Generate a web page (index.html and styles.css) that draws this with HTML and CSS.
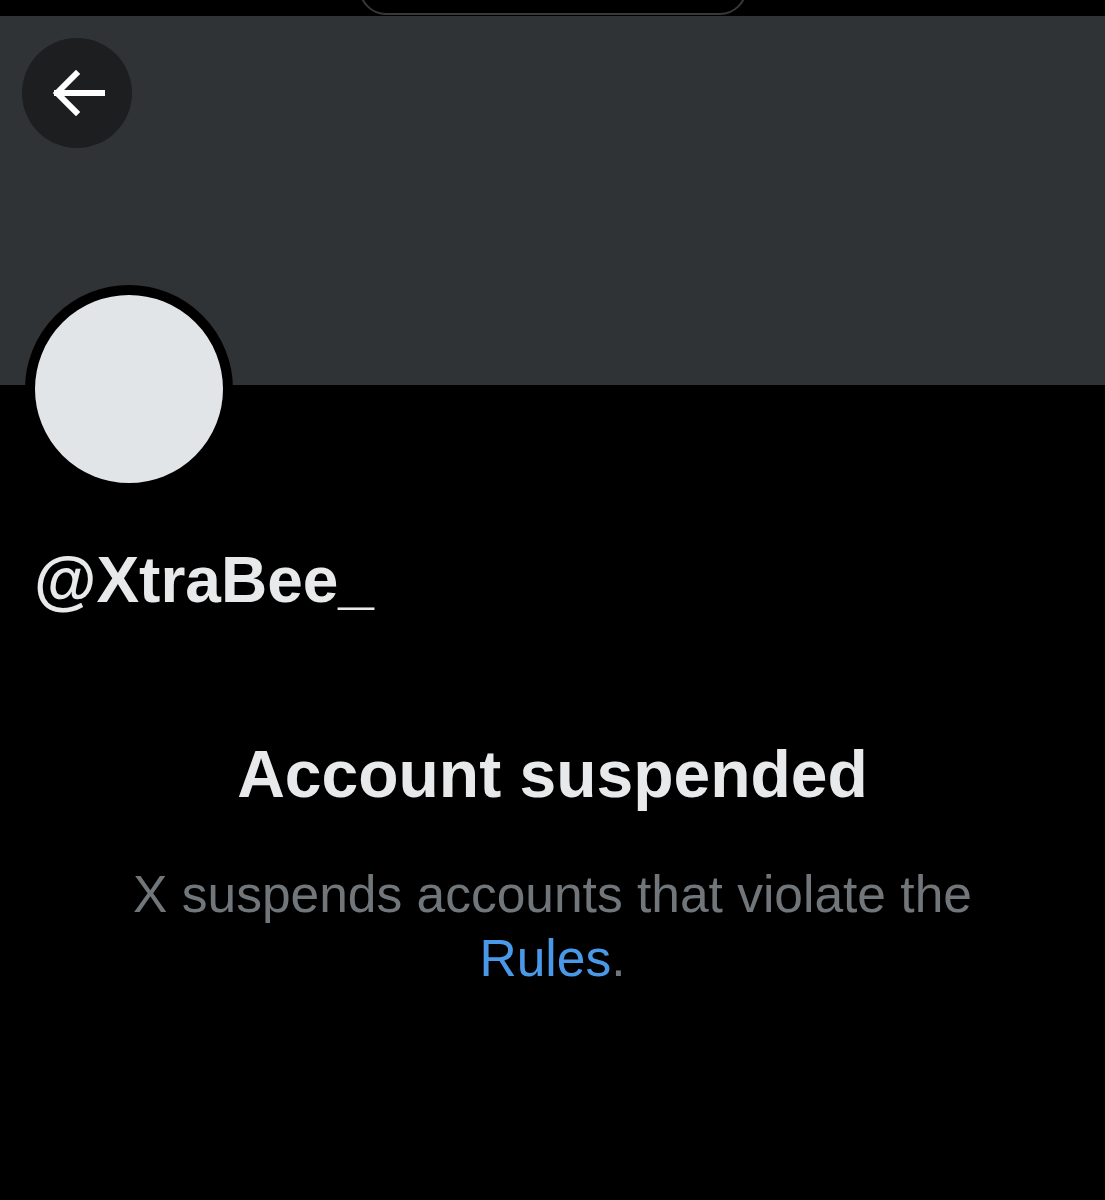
FILE: index.html
```html
<!DOCTYPE html>
<html lang="en">
<head>
    <meta charset="UTF-8">
    <meta name="viewport" content="width=device-width, initial-scale=1.0">
    <title>Account suspended</title>
    <link rel="stylesheet" href="styles.css">
</head>
<body>
    <div class="status-bar">
        <div class="notch"></div>
    </div>

    <div class="banner">
        <button class="back-btn" aria-label="Back">
            <svg viewBox="0 0 110 110" width="110" height="110">
                <path d="M80 55 H35 M54 36 L35 55 L54 74" fill="none" stroke="#fff" stroke-width="6" stroke-linecap="square" stroke-linejoin="miter"/>
            </svg>
        </button>
    </div>

    <div class="profile">
        <div class="avatar"></div>
        <div class="handle">@XtraBee_</div>
    </div>

    <div class="suspended">
        <h1>Account suspended</h1>
        <p>X suspends accounts that violate the <a href="#">Rules</a>.</p>
    </div>
</body>
</html>
```

FILE: styles.css
```css
body {
    margin: 0;
    padding: 0;
    background: #000;
    font-family: "Liberation Sans", Arial, sans-serif;
    height: 1200px;
    overflow: hidden;
}
.status-bar {
    height: 16px;
    display: flex;
    justify-content: center;
    overflow: hidden;
}
.notch {
    width: 384px;
    height: 50px;
    margin-top: -39px;
    border: 2px solid #36383a;
    border-radius: 28px;
    flex-shrink: 0;
}
.banner {
    height: 369px;
    background: #2f3336;
    padding: 22px;
    box-sizing: border-box;
}
.back-btn {
    width: 110px;
    height: 110px;
    padding: 0;
    border: none;
    border-radius: 50%;
    background: #1c1e20;
    display: block;
}
.back-btn svg {
    display: block;
}
.profile {
    padding-left: 25px;
}
.avatar {
    width: 188px;
    height: 188px;
    margin-top: -100px;
    border: 10px solid #000;
    border-radius: 50%;
    background: #e1e5e8;
}
.handle {
    margin-top: 55px;
    margin-left: 9px;
    font-size: 64px;
    line-height: 64px;
    font-weight: bold;
    color: #e7e9ea;
}
.suspended {
    text-align: center;
    margin-top: 129px;
}
.suspended h1 {
    margin: 0;
    font-size: 66px;
    line-height: 66px;
    font-weight: bold;
    color: #e7e9ea;
}
.suspended p {
    max-width: 900px;
    margin: 55px auto 0;
    font-size: 51.5px;
    line-height: 64px;
    color: #71767b;
}
.suspended a {
    color: #4a99e9;
    text-decoration: none;
}
```
